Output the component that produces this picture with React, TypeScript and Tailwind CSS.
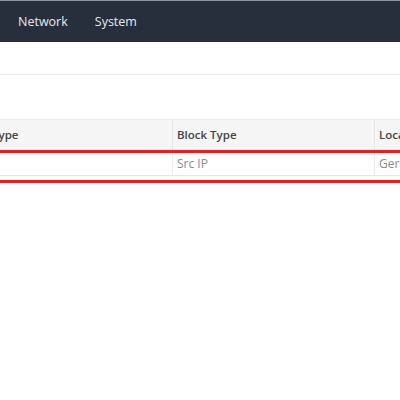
import React from "react";

export default function App() {
  const font = { fontFamily: '"Open Sans", "Noto Sans", Arial, sans-serif' };
  return (
    <div className="w-[400px] h-[400px] overflow-hidden bg-white relative" style={font}>
      <div className="h-[42px] bg-[#262f3b] border-t border-[#8e959d] flex items-center">
        <div className="flex items-center text-[12.5px] text-[#e6ebf0] pl-[18px] gap-[27px] mt-[2px]">
          <span>Network</span>
          <span>System</span>
        </div>
      </div>
      <div className="h-[32px]" />
      <div className="h-px bg-[#e8e8e8]" />
      <div className="h-[44px]" />
      <div className="relative">
        <div className="-ml-[13px] w-[600px]">
          <div className="grid grid-cols-[185px_202px_214px] h-[31px] bg-[#f5f5f5] border-t border-[#ececec] text-[11.5px] font-semibold text-[#444]">
            <div className="px-[5px] flex items-center">Type</div>
            <div className="px-[4px] flex items-center border-l border-[#e6e6e6]">Block Type</div>
            <div className="px-[4px] flex items-center border-l border-[#e6e6e6]">Location</div>
          </div>
          <div className="grid grid-cols-[185px_202px_214px] h-[23px] border-b border-[#e6e6e6] text-[12px] text-[#8a8a8a] mt-[3px]">
            <div className="px-[5px] flex items-center"></div>
            <div className="px-[4px] flex items-center border-l border-[#ececec]">Src IP</div>
            <div className="px-[4px] flex items-center border-l border-[#ececec]">Germany</div>
          </div>
        </div>
        <div className="absolute left-[-10px] right-[-10px] top-[31px] h-[33px] border-[3px] border-[#f01c1c] pointer-events-none" />
      </div>
    </div>
  );
}
